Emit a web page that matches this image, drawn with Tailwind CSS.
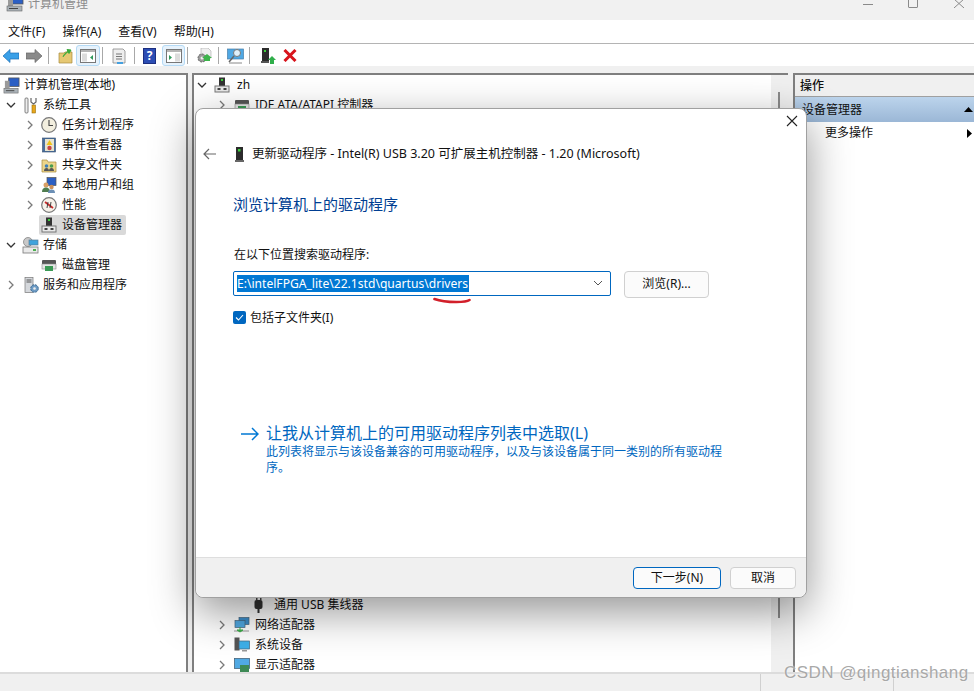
<!DOCTYPE html>
<html lang="zh-CN">
<head>
<meta charset="utf-8">
<script src="https://cdn.jsdelivr.net/npm/@tailwindcss/browser@4"></script>
<title>计算机管理</title>
</head>
<body class="bg-white">
<svg width="0" height="0" class="absolute">
  <defs>
    <symbol id="chev-r" viewBox="0 0 10 10"><path d="M3 1l4 4-4 4" fill="none" stroke="#7a7a7a" stroke-width="1.3"/></symbol>
    <symbol id="chev-d" viewBox="0 0 10 10"><path d="M1 3l4 4 4-4" fill="none" stroke="#333" stroke-width="1.3"/></symbol>
    <symbol id="pc" viewBox="0 0 16 16"><rect x="5" y="0.5" width="6" height="9" fill="#333"/><rect x="7" y="2" width="2" height="2" fill="#3bd13b"/><rect x="1" y="9" width="14" height="6" fill="#e8e8e8" stroke="#777"/><rect x="3.5" y="11" width="3" height="2" fill="#444"/><rect x="9.5" y="11" width="3" height="2" fill="#444"/></symbol>
    <symbol id="mgmt" viewBox="0 0 18 18"><rect x="6" y="1" width="11" height="9" fill="#2b5fc4" stroke="#555" stroke-width=".8"/><rect x="2" y="4" width="5" height="8" fill="#9a9a9a"/><rect x="1" y="12" width="15" height="5" fill="#aab2b8" stroke="#666" stroke-width=".6"/><rect x="3" y="14" width="9" height="1" fill="#444"/></symbol>
    <symbol id="nic" viewBox="0 0 16 16"><rect x="1" y="3" width="14" height="5" rx="1" fill="#555"/><rect x="1" y="7" width="14" height="5" fill="#e5e5e5" stroke="#888" stroke-width=".6"/><rect x="4" y="9" width="8" height="5" fill="#3b9a55"/></symbol>
  </defs>
</svg>

<div class="relative flex h-[691px] w-[974px] flex-col overflow-hidden font-['Noto_Sans','Noto_Sans_CJK_SC',sans-serif] text-[12px] text-[#111]">

  <!-- title bar -->
  <div class="flex h-[20px] items-start bg-[#f1f1f1]">
    <svg class="ml-[6px] -mt-[6px] h-[18px] w-[18px]"><use href="#mgmt"/></svg>
    <span class="ml-[4px] -mt-[5px] text-[12px] leading-[18px] text-[#8c8c8c]">计算机管理</span>
    <div class="ml-auto flex items-start">
      <div class="mt-[4px] mr-[35px] h-px w-[10px] bg-[#8a8a8a]"></div>
      <div class="mr-[36px] -mt-px h-[9px] w-[10px] rounded-b-[1px] border border-[#8a8a8a]"></div>
      <svg class="mr-[10px] -mt-px h-[9px] w-[10px]" viewBox="0 0 10 9"><path d="M0 0l10 9M10 0L0 9" stroke="#8a8a8a"/></svg>
    </div>
  </div>

  <!-- menu bar -->
  <div class="flex h-[24px] items-center gap-[17px] border-b border-[#b4b4b4] bg-white pl-[8px] text-[12px]">
    <span>文件(F)</span><span>操作(A)</span><span>查看(V)</span><span>帮助(H)</span>
  </div>

  <!-- toolbar -->
  <div class="flex h-[22px] items-center bg-white pt-px pl-[3px]">
    <svg class="h-[16px] w-[16px]" viewBox="0 0 16 16"><path d="M0 8l7-6.5V5h9v6H7v3.5z" fill="#3aa0e8" stroke="#1c6fb5" stroke-width=".7"/></svg>
    <svg class="ml-[7px] h-[16px] w-[16px]" viewBox="0 0 16 16"><path d="M16 8L9 1.5V5H0v6h9v3.5z" fill="#8a8a8a" stroke="#666" stroke-width=".7"/></svg>
    <div class="ml-[6px] h-[17px] w-px bg-[#a8a8a8]"></div>
    <svg class="ml-[9px] h-[16px] w-[16px]" viewBox="0 0 16 16"><path d="M1 5h5l1-1h7v11H1z" fill="#e6c873" stroke="#a68a3c" stroke-width=".7"/><path d="M5 9c1-3 3-5 6-6M9 1.5l4 .5-2 3.5z" fill="#3cab3c" stroke="#3cab3c"/></svg>
    <div class="ml-[2px] flex h-[21px] w-[24px] items-center justify-center rounded-[3px] border border-[#b5daf5] bg-[#e6f2fc]">
      <svg class="h-[14px] w-[16px]" viewBox="0 0 16 14"><rect x=".5" y=".5" width="15" height="13" fill="#fff" stroke="#777"/><rect x="1" y="1" width="14" height="2" fill="#b5b5b5"/><rect x="2" y="4.500" width="5" height="8" fill="#dcdcdc"/><path d="M13 6v5l-3-2.500z" fill="#2f9a5c"/></svg>
    </div>
    <div class="ml-[2px] h-[17px] w-px bg-[#a8a8a8]"></div>
    <svg class="ml-[8px] h-[16px] w-[16px]" viewBox="0 0 16 16"><path d="M2 1h10l2 2v12H2z" fill="#eee" stroke="#888" stroke-width=".8"/><path d="M5 6h6M5 8.500h6M5 11h6" stroke="#777"/><rect x="6" y="14" width="6" height="2" fill="#44a0e0"/></svg>
    <div class="ml-[7px] h-[17px] w-px bg-[#a8a8a8]"></div>
    <div class="ml-[8px] flex h-[16px] w-[13px] items-center justify-center border border-[#1c2f80] bg-[#2c4db4] text-[12px] font-bold leading-none text-white">?</div>
    <div class="ml-[6px] flex h-[21px] w-[23px] items-center justify-center rounded-[3px] border border-[#b5daf5] bg-[#e6f2fc]">
      <svg class="h-[14px] w-[16px]" viewBox="0 0 16 14"><rect x=".5" y=".5" width="15" height="13" fill="#fff" stroke="#777"/><rect x="1" y="1" width="14" height="2" fill="#b5b5b5"/><rect x="9" y="4.500" width="5" height="8" fill="#dcdcdc"/><path d="M3 6v5l3-2.500z" fill="#2f9a5c"/></svg>
    </div>
    <div class="ml-[2px] h-[17px] w-px bg-[#a8a8a8]"></div>
    <svg class="ml-[8px] h-[16px] w-[16px]" viewBox="0 0 16 16"><path d="M5 0h7l3 3v7H5z" fill="#eee" stroke="#aaa" stroke-width=".6"/><circle cx="6" cy="10" r="4" fill="#9a9a9a" stroke="#666" stroke-dasharray="2 1"/><circle cx="6" cy="10" r="1.500" fill="#eee"/><path d="M8 13h6v-3h2l-5-4-5 4h2z" fill="#3cb44b"/></svg>
    <div class="ml-[6px] h-[17px] w-px bg-[#a8a8a8]"></div>
    <svg class="ml-[8px] h-[16px] w-[17px]" viewBox="0 0 17 16"><rect x=".5" y="1" width="16" height="10" fill="#4fa8e4" stroke="#4a7fa8" stroke-width=".7"/><circle cx="10" cy="5" r="3.500" fill="#dff0fb" stroke="#777"/><path d="M7 8l-5 6" stroke="#666" stroke-width="1.500"/><path d="M2 15h13" stroke="#888"/></svg>
    <div class="ml-[5px] h-[17px] w-px bg-[#a8a8a8]"></div>
    <svg class="ml-[11px] h-[16px] w-[15px]" viewBox="0 0 15 16"><rect x="1" y="0" width="7" height="13" fill="#2c2c2c"/><rect x="3" y="2" width="2" height="2" fill="#3bd13b"/><rect x="0" y="13" width="8" height="2" fill="#555"/><path d="M7 12l4-4 4 4h-2v4H9v-4z" fill="#2fae4a"/></svg>
    <svg class="ml-[7px] h-[13px] w-[14px]" viewBox="0 0 14 13"><path d="M1.500 1l11 11M12.500 1l-11 11" stroke="#d8141c" stroke-width="3"/></svg>
  </div>

  <!-- panes -->
  <div class="flex min-h-0 flex-1 bg-[#f0f0f0] pt-[7px]">
    <!-- console tree -->
    <div class="w-[188px] shrink-0 border-t-2 border-r-2 border-[#7f7f7f] bg-white">
      <div class="flex h-[20px] items-center pl-[3px]"><svg class="h-[17px] w-[17px]"><use href="#mgmt"/></svg><span class="ml-[4px]">计算机管理(本地)</span></div>
      <div class="flex h-[20px] items-center pl-[6px]"><svg class="h-[10px] w-[10px]"><use href="#chev-d"/></svg>
        <svg class="ml-[8px] h-[17px] w-[13px]" viewBox="0 0 13 17"><rect x="1" y="1" width="3" height="15" rx="1" fill="#eee" stroke="#666" stroke-width=".8"/><rect x="8" y="8" width="3.500" height="8" fill="#e8a71c" stroke="#96700f" stroke-width=".6"/><path d="M7 1v4l2.500 2L12 5V1" fill="none" stroke="#666" stroke-width="1.200"/></svg>
        <span class="ml-[6px]">系统工具</span></div>
      <div class="flex h-[20px] items-center pl-[25px]"><svg class="h-[10px] w-[10px]"><use href="#chev-r"/></svg>
        <svg class="ml-[6px] h-[16px] w-[16px]" viewBox="0 0 16 16"><circle cx="8" cy="8" r="7.300" fill="#f3efdf" stroke="#777" stroke-width="1.200"/><path d="M8 3v5.500h4" fill="none" stroke="#444" stroke-width="1.100"/></svg>
        <span class="ml-[5px]">任务计划程序</span></div>
      <div class="flex h-[20px] items-center pl-[25px]"><svg class="h-[10px] w-[10px]"><use href="#chev-r"/></svg>
        <svg class="ml-[6px] h-[16px] w-[16px]" viewBox="0 0 16 16"><rect x="1.500" y="1" width="13" height="14" fill="#4b6f9c" stroke="#374f70" stroke-width=".6"/><rect x="4" y="2" width="9" height="12" fill="#e8e4d0"/><path d="M8.500 3l3 5h-6z" fill="#f0c419"/><circle cx="8.500" cy="11" r="2.200" fill="#c84545"/></svg>
        <span class="ml-[5px]">事件查看器</span></div>
      <div class="flex h-[20px] items-center pl-[25px]"><svg class="h-[10px] w-[10px]"><use href="#chev-r"/></svg>
        <svg class="ml-[6px] h-[16px] w-[16px]" viewBox="0 0 16 16"><path d="M1 3h5l1 2h8v10H1z" fill="#edd58a" stroke="#a68a3c" stroke-width=".7"/><circle cx="5.500" cy="9" r="1.800" fill="#3f7fb8"/><circle cx="10.500" cy="9" r="1.800" fill="#4b9e52"/><path d="M3 14c0-2 1-3 2.500-3S8 12 8 14zM8 14c0-2 1-3 2.500-3s2.500 1 2.500 3z" fill="#555"/></svg>
        <span class="ml-[5px]">共享文件夹</span></div>
      <div class="flex h-[20px] items-center pl-[25px]"><svg class="h-[10px] w-[10px]"><use href="#chev-r"/></svg>
        <svg class="ml-[6px] h-[16px] w-[16px]" viewBox="0 0 16 16"><rect x="6" y="0.500" width="9" height="8" fill="#2b5fc4" stroke="#555" stroke-width=".7"/><circle cx="5" cy="8" r="2.500" fill="#d9a066"/><path d="M1 15c0-3 1.500-4.500 4-4.500S9 12 9 15z" fill="#4f7d4f"/><circle cx="10.500" cy="10" r="2.200" fill="#c98f5a"/><path d="M7 16c0-2.500 1-3.500 3.500-3.500S14 13.500 14 16z" fill="#6c8fb5"/></svg>
        <span class="ml-[5px]">本地用户和组</span></div>
      <div class="flex h-[20px] items-center pl-[25px]"><svg class="h-[10px] w-[10px]"><use href="#chev-r"/></svg>
        <svg class="ml-[6px] h-[16px] w-[16px]" viewBox="0 0 16 16"><circle cx="8" cy="8" r="7.300" fill="#f6f2ea" stroke="#777" stroke-width="1.200"/><path d="M4 5l8 6" stroke="#c92a2a" stroke-width="1.800"/><path d="M6 11l1-6M10 5l-1 6" stroke="#333" stroke-width=".9"/></svg>
        <span class="ml-[5px]">性能</span></div>
      <div class="flex h-[20px] items-center pl-[39px]"><div class="flex h-[20px] items-center rounded-[2px] bg-[#d9d9d9] pr-[4px] pl-[2px]"><svg class="h-[16px] w-[16px]"><use href="#pc"/></svg><span class="ml-[5px]">设备管理器</span></div></div>
      <div class="flex h-[20px] items-center pl-[6px]"><svg class="h-[10px] w-[10px]"><use href="#chev-d"/></svg>
        <svg class="ml-[6px] h-[17px] w-[17px]" viewBox="0 0 17 17"><circle cx="6" cy="5" r="4.500" fill="#c9c9c9" stroke="#777" stroke-width=".7"/><rect x="7" y="3" width="9" height="5" fill="#3fa3dc" stroke="#5b7f99" stroke-width=".7"/><rect x="1" y="10" width="15" height="6" fill="#eaeaea" stroke="#777" stroke-width=".8"/><rect x="11" y="12" width="3" height="2" fill="#4caf50"/></svg>
        <span class="ml-[4px]">存储</span></div>
      <div class="flex h-[20px] items-center pl-[41px]"><svg class="h-[16px] w-[16px]"><use href="#nic"/></svg><span class="ml-[5px]">磁盘管理</span></div>
      <div class="flex h-[20px] items-center pl-[6px]"><svg class="h-[10px] w-[10px]"><use href="#chev-r"/></svg>
        <svg class="ml-[8px] h-[16px] w-[15px]" viewBox="0 0 15 16"><rect x="1" y="0.500" width="8" height="15" fill="#d5d8dc" stroke="#777" stroke-width=".7"/><path d="M2.500 3h5M2.500 5h5" stroke="#555"/><circle cx="10.500" cy="11.500" r="3.800" fill="#6d9bc4" stroke="#3e6a91" stroke-dasharray="2 1"/><circle cx="10.500" cy="11.500" r="1.300" fill="#eee"/></svg>
        <span class="ml-[4px]">服务和应用程序</span></div>
    </div>

    <!-- device list -->
    <div class="ml-[4px] flex w-[596px] shrink-0 border-t-2 border-l-2 border-[#7f7f7f] bg-white">
      <div class="flex-1">
        <div class="flex h-[20px] items-center pl-[3px]"><svg class="h-[10px] w-[10px]"><use href="#chev-d"/></svg><svg class="ml-[7px] h-[16px] w-[16px]"><use href="#pc"/></svg><span class="ml-[7px]">zh</span></div>
        <div class="flex h-[20px] items-center pl-[23px]"><svg class="h-[10px] w-[10px]"><use href="#chev-r"/></svg><svg class="ml-[7px] h-[16px] w-[16px]"><use href="#nic"/></svg><span class="ml-[5px]">IDE ATA/ATAPI 控制器</span></div>
        <div class="h-[480px]"></div>
        <div class="flex h-[20px] items-center pl-[60px]"><svg class="h-[16px] w-[10px]" viewBox="0 0 10 16"><rect x="2" y="0" width="1.500" height="3" fill="#444"/><rect x="6" y="0" width="1.500" height="3" fill="#444"/><rect x="0.500" y="3" width="8" height="9" rx="2" fill="#333"/><rect x="3.500" y="12" width="2" height="4" fill="#333"/></svg><span class="ml-[10px]">通用 USB 集线器</span></div>
        <div class="flex h-[20px] items-center pl-[23px]"><svg class="h-[10px] w-[10px]"><use href="#chev-r"/></svg><svg class="ml-[7px] h-[16px] w-[16px]" viewBox="0 0 16 16"><rect x="5" y="0.500" width="10" height="7" fill="#3d8fcc" stroke="#46657d" stroke-width=".7"/><rect x="1" y="3.500" width="10" height="7" fill="#50a9e3" stroke="#46657d" stroke-width=".7"/><rect x="0" y="13" width="15" height="2" fill="#ccc"/><path d="M6 10v3M3 13h6l-3 2z" stroke="#3cae4a" fill="#3cae4a"/></svg><span class="ml-[5px]">网络适配器</span></div>
        <div class="flex h-[20px] items-center pl-[23px]"><svg class="h-[10px] w-[10px]"><use href="#chev-r"/></svg><svg class="ml-[7px] h-[16px] w-[16px]" viewBox="0 0 16 16"><rect x="0.500" y="0.500" width="5" height="13" fill="#555"/><rect x="5" y="4" width="10.500" height="8" fill="#3fb0ea" stroke="#46657d" stroke-width=".7"/><rect x="8" y="13" width="5" height="1.500" fill="#999"/></svg><span class="ml-[5px]">系统设备</span></div>
        <div class="flex h-[20px] items-center pl-[23px]"><svg class="h-[10px] w-[10px]"><use href="#chev-r"/></svg><svg class="ml-[7px] h-[16px] w-[16px]" viewBox="0 0 16 16"><rect x="0.500" y="1.500" width="15" height="10" fill="#50a9e3" stroke="#46657d" stroke-width=".8"/><rect x="6" y="8" width="9" height="7" fill="#3d8a55"/><rect x="5" y="15" width="10" height="1" fill="#c9a227"/></svg><span class="ml-[5px]">显示适配器</span></div>
      </div>
      <div class="w-[17px] shrink-0 bg-[#f0f0f0] pt-[17px]"><div class="ml-[7px] h-[526px] w-[2px] bg-[#8a8a8a]"></div></div>
    </div>

    <!-- actions -->
    <div class="ml-[5px] flex-1 border-t-2 border-l-2 border-[#7f7f7f] bg-white">
      <div class="flex h-[22px] items-center border-b border-[#a0a0a0] bg-[#f0f0f0] pl-[5px] font-medium">操作</div>
      <div class="flex h-[25px] items-center justify-between bg-gradient-to-b from-[#bcd4ec] to-[#9bb7d6] pr-px pl-[7px]">设备管理器<svg class="h-[5px] w-[9px]" viewBox="0 0 9 5"><path d="M0 5l4.500-5L9 5z" fill="#000"/></svg></div>
      <div class="flex h-[22px] items-center justify-between pr-[2px] pl-[30px]">更多操作<svg class="h-[9px] w-[5px]" viewBox="0 0 5 9"><path d="M0 0l5 4.500L0 9z" fill="#000"/></svg></div>
    </div>
  </div>

  <!-- status bar -->
  <div class="flex h-[19px] border-t-2 border-[#dcdcdc] bg-[#f0f0f0]">
    <div class="w-[761px] border-r border-[#d0d0d0]"></div>
    <div class="w-[133px] border-r border-[#d0d0d0]"></div>
  </div>

  <!-- wizard dialog -->
  <div class="absolute top-[108px] left-[195px] flex h-[490px] w-[612px] flex-col rounded-[8px] border border-[#a0a0a0] bg-white shadow-[0_14px_44px_rgba(0,0,0,0.42)]">
    <div class="flex justify-end pt-[6px] pr-[8px]">
      <svg class="h-[12px] w-[12px]" viewBox="0 0 12 12"><path d="M1 1l10 10M11 1L1 11" stroke="#222" stroke-width="1.100"/></svg>
    </div>
    <div class="mt-[18px] flex items-center pl-[7px]">
      <svg class="h-[12px] w-[14px]" viewBox="0 0 14 12"><path d="M13 6H1.500M6 1L1 6l5 5" fill="none" stroke="#666" stroke-width="1.200"/></svg>
      <svg class="ml-[18px] h-[15px] w-[9px]" viewBox="0 0 9 15"><rect x="1" y="0" width="7" height="13" fill="#2b2b2b"/><rect x="3" y="2" width="2.500" height="2.500" fill="#3bd13b"/><rect x="0" y="13" width="9" height="2" fill="#666"/></svg>
      <span class="ml-[8px] text-[12.500px]">更新驱动程序 - Intel(R) USB 3.20 可扩展主机控制器 - 1.20 (Microsoft)</span>
    </div>
    <div class="mt-[29px] pl-[37px] text-[15px] leading-[22px] text-[#003e92]">浏览计算机上的驱动程序</div>
    <div class="mt-[31px] pl-[38px] text-[12px] leading-[18px]">在以下位置搜索驱动程序:</div>
    <div class="mt-[7px] flex items-start pl-[37px]">
      <div class="relative flex h-[25px] w-[378px] items-center justify-between rounded-[2px] border border-[#0067c0] bg-white pr-[7px] pl-[3px]">
        <span class="bg-[#0078d4] pr-px text-[12.100px] leading-[17px] text-white">E:\intelFPGA_lite\22.1std\quartus\drivers</span>
        <svg class="absolute top-[25px] left-[199px] h-[8px] w-[38px]" viewBox="0 0 38 8"><path d="M1.500 2c8 3 16 3 22 3s10 0 13-2" fill="none" stroke="#d21f2a" stroke-width="2.600" stroke-linecap="round"/></svg>
        <svg class="h-[6px] w-[10px]" viewBox="0 0 10 6"><path d="M1 1l4 4 4-4" fill="none" stroke="#555"/></svg>
      </div>
      <div class="ml-[13px] flex h-[27px] w-[85px] items-center justify-center rounded-[4px] border border-[#d0d0d0] bg-[#fbfbfb]">浏览(R)...</div>
    </div>
    <div class="mt-[11px] flex items-center pl-[37px]">
      <div class="flex h-[13px] w-[13px] items-center justify-center rounded-[2px] bg-[#0067c0]"><svg class="h-[9px] w-[9px]" viewBox="0 0 9 9"><path d="M1 4.500l2.500 2.500L8 2" fill="none" stroke="#fff" stroke-width="1.100"/></svg></div>
      <span class="ml-[4px]">包括子文件夹(I)</span>
    </div>
    <div class="mt-[95px] flex pl-[45px]">
      <svg class="mt-[5px] h-[14px] w-[18px] shrink-0" viewBox="0 0 18 14"><path d="M0 7h16.500M11 1l6 6-6 6" fill="none" stroke="#0078d4" stroke-width="1.500"/></svg>
      <div class="ml-[7px]">
        <div class="text-[16px] leading-[22px] text-[#0067c0]">让我从计算机上的可用驱动程序列表中选取(L)</div>
        <div class="w-[458px] text-[12px] leading-[16px] text-[#0067c0]">此列表将显示与该设备兼容的可用驱动程序，以及与该设备属于同一类别的所有驱动程序。</div>
      </div>
    </div>
    <div class="mt-auto flex h-[40px] items-center justify-end rounded-b-[8px] border-t border-[#dedede] bg-[#f0f0f0] pr-[10px]">
      <div class="flex h-[22px] w-[88px] items-center justify-center rounded-[4px] border border-[#0067c0] bg-[#fbfbfb]">下一步(N)</div>
      <div class="ml-[9px] flex h-[22px] w-[66px] items-center justify-center rounded-[4px] border border-[#d0d0d0] bg-[#fbfbfb]">取消</div>
    </div>
  </div>

  <!-- watermark -->
  <div class="absolute top-[663px] left-[784px] font-['Liberation_Sans',sans-serif] text-[17px] leading-[20px] tracking-[0.45px] text-[#a8a8a8] [text-shadow:0_0_2px_#fff]">CSDN @qingtianshang</div>
</div>
</body>
</html>
